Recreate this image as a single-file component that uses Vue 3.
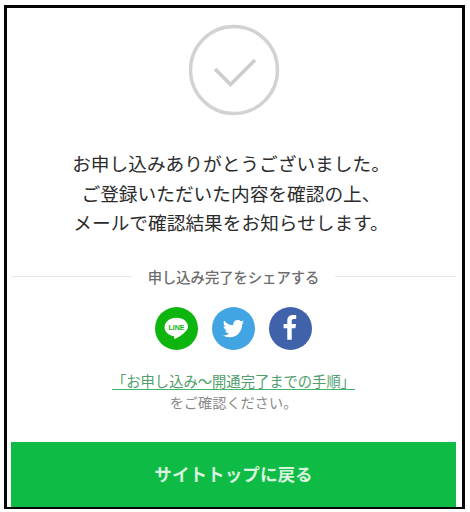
<script setup>
const lines = ['お申し込みありがとうございました。', 'ご登録いただいた内容を確認の上、', 'メールで確認結果をお知らせします。']
</script>

<template>
  <div class="page">
    <main class="frame">
      <svg class="check" width="92" height="92" viewBox="0 0 92 92" aria-hidden="true">
        <circle cx="46" cy="46" r="43.5" fill="none" stroke="#d2d2d2" stroke-width="3.4" />
        <path d="M27 45 L42.5 60.5 L67 36" fill="none" stroke="#cdcdcd" stroke-width="3.6" />
      </svg>
      <div class="message">
        <p v-for="line in lines" :key="line">{{ line }}</p>
      </div>
      <div class="share-head">
        <span class="rule"></span>
        <span class="share-title">申し込み完了をシェアする</span>
        <span class="rule"></span>
      </div>
      <div class="icons">
        <svg width="43" height="43" viewBox="0 0 43 43" aria-hidden="true">
          <circle cx="21.5" cy="21.5" r="21.5" fill="#0eb50f" />
          <path transform="translate(3.2 3.2) scale(.85)" d="M21.5 9C13.500 9 7.500 14 7.500 20.200c0 5.400 4.500 9.500 10.800 10.400.9.200.8 1.100.5 2.400-.1.700.3 1.100 1.200.7 3-1.400 9.800-5.700 12.400-9 1.900-2 2.600-3.400 2.600-4.500C35.500 14 29.500 9 21.500 9z" fill="#fff" />
          <text x="21.500" y="22.800" class="line-text">LINE</text>
        </svg>
        <svg width="43" height="43" viewBox="0 0 43 43" aria-hidden="true">
          <circle cx="21.5" cy="21.5" r="21.500" fill="#42a5e3" />
          <path transform="translate(3.9 3.900) scale(.82)" d="M34.500 13.600c-1 .4-2 .7-3.100.8 1.100-.7 2-1.700 2.400-3-1 .6-2.200 1.100-3.400 1.300-1-1.100-2.400-1.700-3.900-1.700-3 0-5.400 2.400-5.400 5.400 0 .4 0 .8.100 1.200-4.500-.2-8.500-2.400-11.100-5.700-.5.800-.7 1.700-.7 2.700 0 1.900 1 3.500 2.400 4.500-.9 0-1.700-.3-2.400-.7v.1c0 2.600 1.900 4.800 4.300 5.300-.5.100-.9.200-1.400.2-.3 0-.7 0-1-.1.700 2.100 2.700 3.700 5 3.700-1.800 1.500-4.200 2.300-6.700 2.300-.4 0-.9 0-1.300-.1 2.400 1.500 5.200 2.400 8.300 2.400 9.900 0 15.400-8.200 15.400-15.400v-.7c1-.8 1.900-1.700 2.700-2.800z" fill="#fff" />
        </svg>
        <svg width="43" height="43" viewBox="0 0 43 43" aria-hidden="true">
          <circle cx="21.500" cy="21.500" r="21.500" fill="#3f62aa" />
          <path transform="translate(.7 .1) scale(.93)" d="M23.700 35V22.800h4l.6-4.700h-4.600v-3c0-1.400.4-2.300 2.300-2.300h2.500V8.600c-.4-.1-1.900-.2-3.600-.2-3.600 0-6 2.200-6 6.200v3.500h-4v4.700h4V35z" fill="#fff" />
        </svg>
      </div>
      <a class="guide" href="#">「お申し込み〜開通完了までの手順」</a>
      <p class="note">をご確認ください。</p>
      <a class="back" href="#">サイトトップに戻る</a>
    </main>
  </div>
</template>

<style>
html, body { margin: 0; background: #fff; }
</style>

<style scoped>
.page {
  width: 470px;
  height: 512px;
  padding: 5px 5px 0 4px;
  box-sizing: border-box;
  font-family: "Noto Sans CJK JP", "Noto Sans", sans-serif;
  overflow: hidden;
}
.frame {
  height: 504px;
  box-sizing: border-box;
  border: 3px solid #050505;
  border-bottom-width: 2px;
  padding: 16px 6px 0 4px;
  display: flex;
  flex-direction: column;
  align-items: center;
  background: #fff;
}
.check { flex: none; }
.message {
  margin-top: 32px;
  padding-right: 5px;
  text-align: center;
  font-size: 18.7px;
  line-height: 29.5px;
  color: #2c2c2c;
}
.message p { margin: 0; }
.share-head {
  width: 100%;
  margin-top: 30px;
  display: flex;
  align-items: center;
  gap: 16px;
}
.rule {
  flex: 1;
  height: 1px;
  background: #e8e8e8;
}
.share-title {
  font-size: 14.3px;
  font-weight: 500;
  line-height: 20px;
  color: #6d6d6d;
}
.icons {
  margin-top: 20px;
  display: flex;
  gap: 14px;
}
.line-text {
  font: 700 7px "Liberation Sans", sans-serif;
  fill: #0eb50f;
  text-anchor: middle;
}
.guide {
  margin-top: 23px;
  font-size: 14.3px;
  line-height: 16px;
  color: #4f9e6c;
  text-decoration: none;
  border-bottom: 1px solid #3fb56d;
}
.note {
  margin: 2px 0 0;
  font-size: 14.2px;
  line-height: 21px;
  color: #8a8a8a;
}
.back {
  margin-top: auto;
  align-self: stretch;
  height: 65px;
  padding-bottom: 2px;
  box-sizing: border-box;
  display: flex;
  align-items: center;
  justify-content: center;
  background: #0dbb45;
  color: #d8f3de;
  font-size: 17.6px;
  font-weight: 700;
  text-decoration: none;
}
</style>
